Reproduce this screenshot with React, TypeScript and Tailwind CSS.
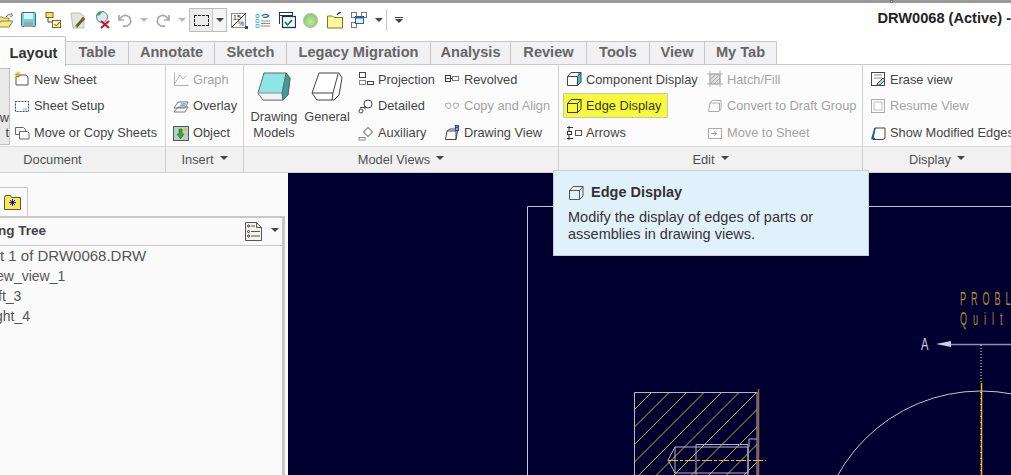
import type { ReactNode } from "react";

const Svg = ({ children, w = 16, h = 16, className = "" }: { children: ReactNode; w?: number; h?: number; className?: string }) => (
  <svg width={w} height={h} viewBox={`0 0 ${w} ${h}`} fill="none" className={`shrink-0 ${className}`}>
    {children}
  </svg>
);

const Caret = ({ className = "" }: { className?: string }) => (
  <span className={`inline-block w-0 h-0 border-x-[4px] border-x-transparent border-t-[4px] border-t-[#444] ${className}`} />
);

const Cube = ({ stroke = "#444", accent }: { stroke?: string; accent?: string }) => (
  <Svg>
    {accent && <path d="M12 1h3v10l-3 3z" fill={accent} />}
    <path d="M1.500 5.500 5 1.500h10v9.500L11.500 14.500h-10z M1.500 5.500h10v9 M11.500 5.500 15 1.500" stroke={stroke} />
  </Svg>
);

const icons: Record<string, ReactNode> = {
  newSheet: (
    <Svg>
      <path d="M2 5.500h3l1-1.500h6l2 2v8H2z" fill="#fff" stroke="#555" />
      <path d="M4 0.500v6M1 3.500h6M2 1.500l4 4M6 1.500l-4 4" stroke="#d8a000" />
    </Svg>
  ),
  setup: (
    <Svg>
      <rect x="1.500" y="3.500" width="13" height="10" fill="#fff" stroke="#2a4f96" strokeDasharray="2 1" />
      <path d="M9 10h4v3H9z" fill="#cfd8ea" />
    </Svg>
  ),
  move: (
    <Svg>
      <path d="M1.500 2.500h8l2 2v5h-10z" fill="#fff" stroke="#666" />
      <path d="M5.500 6.500h8l1.500 1.500v6H5.500z" fill="#fff" stroke="#666" />
    </Svg>
  ),
  graph: (
    <Svg>
      <path d="M1.500 1.500v13h14M2 12l5-8 3 4 3-3" stroke="#b0b0b0" />
    </Svg>
  ),
  overlay: (
    <Svg>
      <path d="M1 14h11l3-5H5zM1 10h11l3-6H5z" fill="#fff" stroke="#777" />
      <path d="M8 5h5l-1 3H7z" fill="#8fb8e8" />
    </Svg>
  ),
  object: (
    <Svg>
      <rect x="0.500" y="1.500" width="15" height="14" fill="#b8d0c8" stroke="#555" />
      <path d="M6 4h3v5h2l-3.500 5L4 9h2z" fill="#39a83a" stroke="#1f6f1f" strokeWidth="0.600" />
      <circle cx="12" cy="4.500" r="2" fill="#f0c040" />
    </Svg>
  ),
  projection: (
    <Svg>
      <rect x="1.500" y="1.500" width="6" height="5" fill="#fff" stroke="#444" />
      <rect x="1.500" y="9.500" width="6" height="4" fill="#fff" stroke="#888" />
      <rect x="9.500" y="10.500" width="6" height="3" fill="#fff" stroke="#444" />
    </Svg>
  ),
  detailed: (
    <Svg>
      <circle cx="10" cy="6" r="4" stroke="#444" />
      <path d="M2 9.500h6M7 8.500v3" stroke="#444" />
      <circle cx="3" cy="13" r="2" fill="#fff" stroke="#444" />
    </Svg>
  ),
  auxiliary: (
    <Svg>
      <path d="M5.500 7 10 2.500 14.500 7 10 11.500z" fill="#fff" stroke="#444" />
      <rect x="1" y="12.500" width="6" height="2.500" fill="#fff" stroke="#888" />
    </Svg>
  ),
  revolved: (
    <Svg>
      <rect x="1.500" y="4.500" width="5" height="6" stroke="#333" />
      <rect x="8.500" y="5.500" width="6" height="4" stroke="#777" />
      <path d="M2.500 7.500h3M7 7.500h1" stroke="#333" />
    </Svg>
  ),
  copyAlign: (
    <Svg>
      <path d="M1.500 5.500 6 5l1 3-2 3-3-2zM10 5l4.500 .5-.5 3.500-3 1.500-1.500-3z" fill="#fff" stroke="#aaa" />
    </Svg>
  ),
  drawingView: (
    <Svg>
      <path d="M1.500 14.500 3 6h9v8.500z" fill="#fff" stroke="#444" />
      <path d="M3 6l3-2h8l-2 10.500" stroke="#444" />
      <rect x="11" y="0" width="4" height="6" fill="#1e44c8" />
      <path d="M13 1v.8M13 2.800v2.200" stroke="#fff" />
    </Svg>
  ),
  hatch: (
    <Svg>
      <rect x="3" y="3" width="10" height="10" fill="#ddd" stroke="#aaa" />
      <path d="M3 9l6-6M3 13 13 3M7 13l6-6M0 3h16M0 13h16M3 0v16M13 0v16" stroke="#aaa" strokeWidth="0.800" />
    </Svg>
  ),
  draft: (
    <Svg>
      <path d="M1.500 13.500 3 5l2-2.500h9V11l-2 2.500z M3 5h9.500v8" fill="#fff" stroke="#aaa" />
    </Svg>
  ),
  moveSheet: (
    <Svg>
      <rect x="1.500" y="3.500" width="13" height="10" fill="#fff" stroke="#aaa" />
      <path d="M4 8.500h5M7 6.500l2.500 2-2.500 2" stroke="#999" />
    </Svg>
  ),
  arrows: (
    <Svg>
      <path d="M3 1v14M1 2.500h6M1 13.500h6" stroke="#333" />
      <rect x="9.500" y="5.500" width="6" height="5" stroke="#555" />
      <rect x="1.500" y="6.500" width="4" height="3" fill="#fff" stroke="#333" />
    </Svg>
  ),
  erase: (
    <Svg>
      <rect x="1.500" y="1.500" width="13" height="13" fill="#fff" stroke="#444" />
      <path d="M4 4h8M4 7h8" stroke="#888" />
      <path d="M7 13l6-6 2 2-5 5H7z" fill="#b8cfe8" stroke="#456" />
    </Svg>
  ),
  resume: (
    <Svg>
      <rect x="1.500" y="1.500" width="13" height="13" fill="#fff" stroke="#aaa" />
      <path d="M4 4h8v8H4z" stroke="#bbb" />
    </Svg>
  ),
  modified: (
    <Svg>
      <path d="M5 3h10v10l-2 1.500H3z" fill="#fff" stroke="#444" />
      <path d="M5 3 2 13.500h3" stroke="#1e50d0" strokeWidth="1.500" />
    </Svg>
  ),
};

const Item = ({ icon, label, off }: { icon: string; label: string; off?: boolean }) => (
  <div className={`flex items-center gap-1 whitespace-nowrap ${off ? "text-[#a3a3a3]" : "text-[#454545]"}`}>
    {icons[icon]}
    <span>{label}</span>
  </div>
);

const Col = ({ children, className = "" }: { children: ReactNode; className?: string }) => (
  <div className={`grid grid-rows-3 h-[80px] mt-px items-center shrink-0 ${className}`}>{children}</div>
);

const Group = ({
  width,
  label,
  caret,
  children,
  last,
  labelClass = "",
}: {
  width: string;
  label: string;
  caret?: boolean;
  children: ReactNode;
  last?: boolean;
  labelClass?: string;
}) => (
  <div className={`flex flex-col ${width} ${last ? "min-w-0 overflow-hidden" : "shrink-0 border-r border-[#d0d0d0]"}`}>
    <div className="flex h-[82px] border-b border-[#d8d8d8]">{children}</div>
    <div className={`flex h-[25px] items-center justify-center gap-1.5 bg-[#f1f1f1] text-[#505050] ${labelClass}`}>
      <span>{label}</span>
      {caret && <Caret className="mb-1 border-t-[#333]" />}
    </div>
  </div>
);

const tabs = [
  ["Table", "w-[63px]"],
  ["Annotate", "w-[86px]"],
  ["Sketch", "w-[72px]"],
  ["Legacy Migration", "w-[144px]"],
  ["Analysis", "w-[80px]"],
  ["Review", "w-[76px]"],
  ["Tools", "w-[63px]"],
  ["View", "w-[55px]"],
  ["My Tab", "w-[72px]"],
];

const QuickBar = () => (
  <div className="flex h-[34px] items-center bg-white">
    <Svg w={14} h={15}>
      <path d="M-3 13V4h5l1 1h6v3" fill="#f5e28a" stroke="#9a8530" />
      <path d="M-3 14 1 8h12l-4 6z" fill="#f8e88e" stroke="#9a8530" />
      <path d="M6 4c1-2 3-3 5-2M11 0l1.500 2.500L10 4" stroke="#666" />
    </Svg>
    <Svg w={16} h={16} className="ml-[7px]">
      <rect x="0.500" y="0.500" width="14" height="14" rx="1" fill="#73d4e4" stroke="#3a6d8c" />
      <rect x="3" y="1" width="9" height="6" fill="#d8f4f8" />
      <rect x="3" y="10" width="9" height="5" fill="#9aa6ac" />
    </Svg>
    <Svg w={16} h={17} className="ml-[8px]">
      <rect x="1" y="0.500" width="7" height="5" fill="#f4e06a" stroke="#7a6a10" />
      <path d="M3 5v5h4" stroke="#444" />
      <rect x="7.500" y="8.500" width="8" height="7" fill="#fff6c0" stroke="#7a6a10" />
      <path d="M9.500 12l2 2 3-4" stroke="#c02020" />
    </Svg>
    <Svg w={16} h={17} className="ml-[9px]">
      <path d="M1 1h9l4 3v12H3z" fill="#e6e4da" stroke="#bbb" />
      <path d="M5 14 13 5l2 2-8 9z" fill="#3f6f2a" />
      <path d="M11 7l2-2 2 2-2 2z" fill="#d03030" />
      <path d="M4 15l2-2 1 2z" fill="#e0b030" />
    </Svg>
    <Svg w={17} h={18} className="ml-[8px]">
      <circle cx="8" cy="6" r="5.500" fill="#dfe8f4" stroke="#5a7fa8" />
      <path d="M2 5a5 5 0 0 1 6-4l-2 3z" fill="#3ba83b" />
      <path d="M7 10 15 17M15 10 7 17" stroke="#c01818" strokeWidth="2" />
    </Svg>
    <Svg w={15} h={13} className="ml-[7px]">
      <path d="M2 5a5.500 5.500 0 1 1 3 7h4M1 1v5h5" stroke="#a8a8a8" strokeWidth="1.700" />
    </Svg>
    <Caret className="ml-[7px] border-t-[#bbb]" />
    <Svg w={15} h={13} className="ml-[7px]">
      <path d="M13 5a5.500 5.500 0 1 0-3 7H6M14 1v5H9" stroke="#a8a8a8" strokeWidth="1.700" />
    </Svg>
    <Caret className="ml-[8px] border-t-[#bbb]" />
    <div className="ml-[3px] flex h-[24px] w-[38px] border border-[#bcbcbc] bg-[#ececec]">
      <div className="flex w-[23px] items-center justify-center border-r border-[#c8c8c8]">
        <div className="h-[11px] w-[15px] border border-dashed border-[#222]" />
      </div>
      <div className="flex flex-1 items-center justify-center bg-[#f4f4f4]">
        <Caret />
      </div>
    </div>
    <Svg w={17} h={17} className="ml-[4px]">
      <rect x="0.500" y="1.500" width="14" height="14" fill="#fff" stroke="#8a8a8a" />
      <path d="M1 15 15 1" stroke="#333" />
      <text x="2" y="8" fontSize="7" fontFamily="Liberation Sans" fill="#222">15</text>
      <text x="7" y="14" fontSize="7" fontFamily="Liberation Sans" fill="#222">%</text>
      <rect x="14" y="14" width="3" height="3" fill="#1e44a8" />
    </Svg>
    <Svg w={16} h={16} className="ml-[7px]">
      <path d="M1 2.500h3v3H1zM1 7.500h3v3H1zM1 12.500h3v3H1z" fill="#e8fbff" stroke="#34b4cc" strokeWidth="0.800" />
      <path d="M6 9h9M6 11.500h9M6 14h9" stroke="#888" />
      <path d="M7 4a4 3 0 0 1 7 0M14 3a4 3 0 0 1-6 2" stroke="#2060c8" strokeWidth="1.300" />
    </Svg>
    <Svg w={17} h={17} className="ml-[8px]">
      <rect x="0.500" y="0.500" width="13" height="3" fill="#fff" stroke="#16327a" />
      <path d="M0.500 3v9" stroke="#16327a" />
      <rect x="3.500" y="4.500" width="13" height="11" fill="#fff" stroke="#16327a" strokeWidth="1.300" />
      <path d="M6 10l2.500 3L13 8" stroke="#138a20" strokeWidth="1.800" />
    </Svg>
    <div className="ml-[7px] h-[15px] w-[15px] rounded-full border border-[#a8b8a0] bg-[radial-gradient(circle_at_50%_60%,#b8f090,#84b870)]" />
    <Svg w={16} h={17} className="ml-[9px]">
      <path d="M0.500 16V4h5l1.500 1.500h8.500V16z" fill="#fff7a0" stroke="#7a7a20" />
      <path d="M10 3c1-2 2-2.500 4-2.500" stroke="#333" strokeWidth="1.300" />
    </Svg>
    <Svg w={16} h={16} className="ml-[8px]">
      <rect x="0.500" y="0.500" width="5" height="5" fill="#fff" stroke="#777" />
      <rect x="10.500" y="0.500" width="5" height="5" fill="#fff" stroke="#777" />
      <rect x="0.500" y="10.500" width="5" height="5" fill="#fff" stroke="#777" />
      <rect x="4.500" y="4.500" width="8" height="7" fill="#e4f0fc" stroke="#2a5cb0" />
      <path d="M4.500 5.500h8" stroke="#2a5cb0" strokeWidth="2" />
    </Svg>
    <Caret className="ml-[8px]" />
    <div className="ml-[3px] h-[22px] w-px bg-[#c8c8c8]" />
    <div className="ml-[8px] flex flex-col items-center">
      <div className="mb-px h-px w-[8px] bg-[#444]" />
      <Caret />
    </div>
    <div className="ml-auto -mt-[2px] whitespace-nowrap text-[14.6px] font-bold text-[#222]">DRW0068 (Active) -</div>
  </div>
);

const TabStrip = () => (
  <div className="flex h-[28px] items-end bg-white">
    <div className="z-10 -mb-px -mt-1 flex h-[30px] w-[66px] items-center justify-center rounded-tr-[2px] border-r border-t border-[#c4c4c4] bg-[#fcfcfc] pl-[2px] pt-[4px] text-[14.6px] font-bold text-[#333]">
      Layout
    </div>
    {tabs.map(([name, width]) => (
      <div
        key={name}
        className={`flex h-[24px] items-center justify-center border-r border-t border-b border-[#c8c8c8] bg-[#f1f1f3] pb-px text-[14.6px] font-bold text-[#666] ${width}`}
      >
        {name}
      </div>
    ))}
    <div className="h-px flex-1 bg-[#c8c8c8]" />
  </div>
);

const Ribbon = () => (
  <div className="flex border-b border-[#cfcfcf] bg-[#fcfcfc] text-[12.8px]">
    <Group width="w-[166px]" label="Document" labelClass="pr-[60px]">
      <div className="mt-[3px] flex h-[77px] w-[10px] shrink-0 flex-col items-end justify-end overflow-hidden border-r border-y border-[#c0c0c0] bg-[#e9e9e9] pb-[4px] leading-[15px] text-[#454545]">
        <span>w</span>
        <span>t</span>
      </div>
      <Col className="ml-[4px]">
        <Item icon="newSheet" label="New Sheet" />
        <Item icon="setup" label="Sheet Setup" />
        <Item icon="move" label="Move or Copy Sheets" />
      </Col>
    </Group>
    <Group width="w-[78px]" label="Insert" caret>
      <Col className="ml-[7px]">
        <Item icon="graph" label="Graph" off />
        <Item icon="overlay" label="Overlay" />
        <Item icon="object" label="Object" />
      </Col>
    </Group>
    <Group width="w-[315px]" label="Model Views" caret>
      <div className="flex w-[60px] shrink-0 flex-col items-center pt-[7px] text-center leading-[16px] text-[#454545]">
        <svg width="34" height="30" viewBox="0 0 34 30" className="mb-[7px]">
          <path d="M1 21 7 1h22l4 5-2 17-5 5H6z" fill="#8ce6e6" stroke="#666" />
          <path d="M1 21l5 7h20l-1-7z" fill="#f0f4f4" stroke="#888" />
          <path d="M25 21 29 1l4 5-2 17-5 5z" fill="#3f9a9c" stroke="#666" />
        </svg>
        <span>Drawing</span>
        <span>Models</span>
      </div>
      <div className="flex w-[46px] shrink-0 flex-col items-center pt-[7px] leading-[16px] text-[#454545]">
        <svg width="32" height="30" viewBox="0 0 32 30" className="mb-[7px]">
          <path d="M1 21 8 1h20l3 5-3 17-5 5H6z" fill="#fff" stroke="#444" />
          <path d="M1 21h21l-1 7M22 21 27 2" stroke="#444" fill="none" />
        </svg>
        <span>General</span>
      </div>
      <Col className="ml-[8px] w-[86px]">
        <Item icon="projection" label="Projection" />
        <Item icon="detailed" label="Detailed" />
        <Item icon="auxiliary" label="Auxiliary" />
      </Col>
      <Col>
        <Item icon="revolved" label="Revolved" />
        <Item icon="copyAlign" label="Copy and Align" off />
        <Item icon="drawingView" label="Drawing View" />
      </Col>
    </Group>
    <Group width="w-[304px]" label="Edit" caret>
      <Col className="ml-[7px] w-[141px]">
        <div className="flex items-center gap-1 whitespace-nowrap text-[#454545]">
          <Cube accent="#35c8cc" />
          <span>Component Display</span>
        </div>
        <div className="-ml-[3px] flex h-[25px] w-[105px] items-center gap-1 rounded-[1px] border border-[#c4c8b0] bg-[#f8f83c] pl-[2px] whitespace-nowrap text-[#3a3a10]">
          <Cube stroke="#3a3a10" />
          <span>Edge Display</span>
        </div>
        <Item icon="arrows" label="Arrows" />
      </Col>
      <Col>
        <Item icon="hatch" label="Hatch/Fill" off />
        <Item icon="draft" label="Convert to Draft Group" off />
        <Item icon="moveSheet" label="Move to Sheet" off />
      </Col>
    </Group>
    <Group width="flex-1" label="Display" caret last>
      <Col className="ml-[7px]">
        <Item icon="erase" label="Erase view" />
        <Item icon="resume" label="Resume View" off />
        <Item icon="modified" label="Show Modified Edges" />
      </Col>
    </Group>
  </div>
);

const TreePanel = () => (
  <div className="w-[288px] shrink-0 overflow-hidden bg-[#fafafa] pt-[14px] pr-[3px]">
    <div className="flex h-[30px] w-[28px] items-center justify-end rounded-tr-[2px] border-r border-t border-[#c8c8c8] pr-[6px]">
      <Svg w={17} h={15}>
        <path d="M0.500 14.500V2.500l1-2h5l1 2h9v12z" fill="#ffe94a" stroke="#555" />
        <path d="M8.500 4v7M5 7.500h7M6 5l5 5M11 5l-5 5" stroke="#1010e0" />
      </Svg>
    </div>
    <div className="-mt-px h-[260px] border-r-[3px] border-t-2 border-[#c8c8c8]">
      <div className="flex h-[28px] items-center border-b border-[#c8c8c8] text-[13.5px] font-bold text-[#444]">
        <span className="-ml-[2px]">ng Tree</span>
        <Svg w={17} h={19} className="ml-auto mr-[9px]">
          <path d="M0.500 0.500h11l5 5v13h-16z" fill="#f4f4ec" stroke="#555" />
          <path d="M11.500 0.500v5h5M6 4h4M6 9.500h9M6 14h9" stroke="#555" />
          <circle cx="3.500" cy="4" r="1" stroke="#333" />
          <circle cx="3.500" cy="9.500" r="1" stroke="#333" />
          <circle cx="3.500" cy="14" r="1" stroke="#333" />
        </Svg>
        <Caret className="mr-[3px] mb-1 border-t-[#333]" />
      </div>
      <div className="text-[14px] leading-[20px] text-[#555]">
        <div className="text-[15px]">t 1 of DRW0068.DRW</div>
        <div className="-ml-[4px]">ew_view_1</div>
        <div className="-ml-[2px]">ft_3</div>
        <div className="-ml-[5px]">ght_4</div>
      </div>
    </div>
  </div>
);

const hatchLines = Array.from({ length: 13 }, (_, i) => 1026.5 + 17.5 * i);

const DrawingCanvas = () => (
  <div className="flex-1 bg-[#000030]">
    {/* viewBox keeps page coordinates so the drawing is easy to compare */}
    <svg viewBox="288 173 723 302" className="block h-[302px] w-[723px]" fill="none">
      <defs>
        <clipPath id="sec">
          <rect x="634" y="392" width="123" height="83" />
        </clipPath>
      </defs>
      <path d="M527.500 475V206.500H1011" stroke="#c8c8d4" />
      <g fontFamily="Liberation Sans" fontSize="18" fill="#b8892b">
        <text transform="translate(960 305) scale(0.5 1)" letterSpacing="10">PROBL</text>
        <text transform="translate(960 325) scale(0.5 1)" letterSpacing="12">Quilt</text>
      </g>
      <text transform="translate(921 350) scale(0.7 1)" fontFamily="Liberation Sans" fontSize="16" fill="#d0d0e0">A</text>
      <path d="M936 344l15-3v6z" fill="#d0d0e4" />
      <path d="M951 344.500h60" stroke="#9090b0" strokeWidth="1.500" />
      <path d="M981 345v38" stroke="#fff" strokeDasharray="1 2" />
      <path d="M981.500 383v92" stroke="#f2b01e" strokeWidth="1.500" />
      <path d="M981 392v83" stroke="#fff" strokeDasharray="1 5" />
      <circle cx="981" cy="555" r="164" stroke="#c4c4d4" />
      <g clipPath="url(#sec)" stroke="#d8aa38" strokeWidth="1">
        {hatchLines.map((c) => (
          <line key={c} x1={c - 392} y1="392" x2={c - 475} y2="475" />
        ))}
      </g>
      <path d="M634.500 475V392.500H757" stroke="#b4b4c4" />
      <path d="M757 392v83" stroke="#b4b4c4" />
      <path d="M758.500 389v86" stroke="#a0683c" strokeWidth="1.500" />
      <path d="M675 447h73v26h-73zM696 444.500h52V475M696 444.500V475M675 447l-7 13 7 13M749 447v-8h8" stroke="#b4b4c8" />
      <path d="M668 460.500h98" stroke="#e8b838" strokeDasharray="10 2 3 2" />
    </svg>
  </div>
);

export default function App() {
  return (
    <div className="relative h-[475px] w-[1011px] overflow-hidden bg-white font-['Liberation_Sans',Arial,sans-serif]">
      <div className="h-[3px] bg-[#9a9a9a]" />
      <div className="absolute left-[890px] top-0 h-[3px] w-[3px] border border-[#777] bg-white" />
      <QuickBar />
      <TabStrip />
      <Ribbon />
      <div className="flex h-[302px]">
        <TreePanel />
        <DrawingCanvas />
      </div>
      <div className="absolute left-[553px] top-[170px] h-[86px] w-[316px] border border-[#c6ccd2] bg-[#e1f1fb] pl-[14px] pt-[13px] text-[14.5px] leading-[17px] text-[#333] shadow-sm">
        <div className="mb-[8px] flex items-center gap-[7px] font-bold">
          <Cube stroke="#555" />
          <span>Edge Display</span>
        </div>
        <div>Modify the display of edges of parts or</div>
        <div>assemblies in drawing views.</div>
      </div>
    </div>
  );
}
